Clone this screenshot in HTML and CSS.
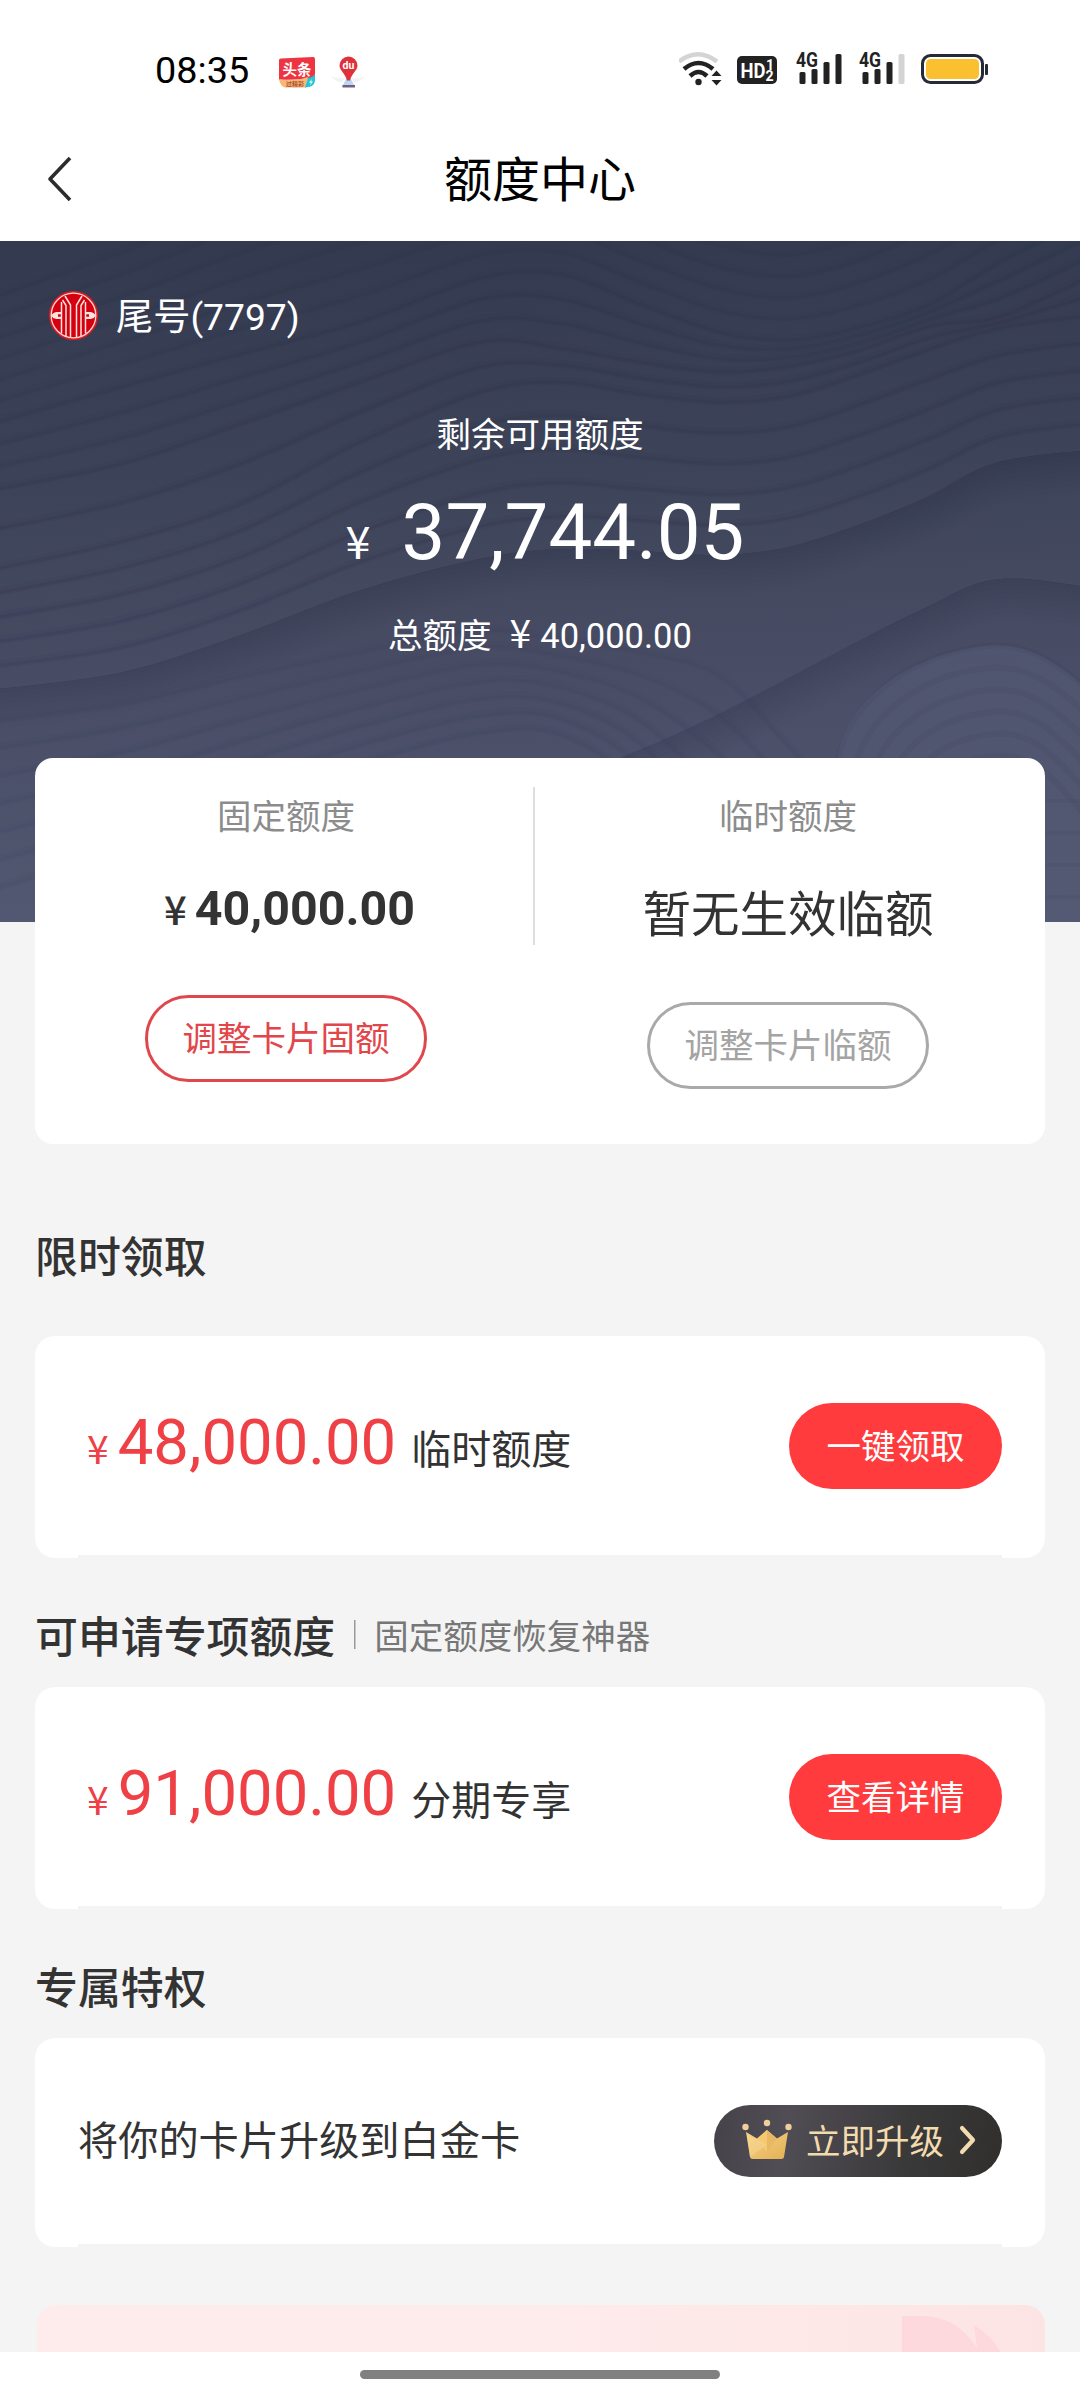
FILE: index.html
```html
<!DOCTYPE html>
<html lang="zh-CN">
<head>
<meta charset="utf-8">
<title>额度中心</title>
<link rel="stylesheet" href="styles.css">
</head>
<body>
<div class="screen">
  <div class="status">
    <div class="status-left">
      <span class="clock">08:35</span>
      <svg class="app" width="36" height="31" viewBox="0 0 36 31">
        <path d="M0 3Q0 1.500 2 1.400L34 0Q36 0 36 2V22L0 23Z" fill="#ee3440"/>
        <path d="M0 22Q16 25 29 20L27 30.500H6Q1 29 0 22Z" fill="#f8b877"/>
        <path d="M29 21Q34 20 36 17V24Q35 30.500 26 30.500Z" fill="#27c4d6"/>
        <text x="18" y="18" font-size="14.500" text-anchor="middle" class="t-bold" fill="#fff">头条</text>
        <text x="16" y="28.500" font-size="6" text-anchor="middle" class="t-bold" fill="#b0522e">过精彩</text>
        <path d="M33 22l-3 3.500h2l-1 3 3-4h-2z" fill="#fff"/>
      </svg>
      <svg class="pin" width="36" height="32" viewBox="0 0 36 32">
        <path d="M1 20q8 4 15 1l-5 6q-6-2-10-7zM35 20q-8 4-15 1l5 6q6-2 10-7z" fill="#f2f3f4"/>
        <path d="M18.500 18L25 31H12z" fill="#b7d9f3"/>
        <path d="M12.500 29h12.500v2.500H12.500z" fill="#7b5d84"/>
        <path d="M18.500 0.500a9 9 0 0 1 9 9c0 5-6 8-7.500 15h-3c-1.500-7-7.500-10-7.500-15a9 9 0 0 1 9-9z" fill="#e0313a"/>
        <text x="18.500" y="13" font-size="10.500" text-anchor="middle" class="t-bold" fill="#fff">du</text>
      </svg>
    </div>
    <svg class="status-right" width="312" height="40" viewBox="0 -4 312 40">
      <g fill="none" stroke-width="4.500">
        <path d="M0 9.500Q19-5 38 9.500" stroke="#d4d4d4"/>
        <path d="M5 17Q19.500 5 34 17" stroke="#222"/>
        <path d="M11 24Q19.500 16 28 24" stroke="#222"/>
      </g>
      <circle cx="19.500" cy="30" r="3.200" fill="#222"/>
      <path d="M32.500 24l5-5.500 5 5.500zM32.500 28l5 5.500 5-5.500z" fill="#222"/>
      <rect x="58" y="4" width="40" height="28" rx="5" fill="#222"/>
      <text x="61.500" y="26" font-size="21" textLength="25" lengthAdjust="spacingAndGlyphs" class="t-bold" fill="#fff">HD</text>
      <text x="87" y="17.500" font-size="14" class="t-bold" fill="#fff">1</text>
      <text x="86.500" y="29" font-size="14" class="t-bold" fill="#fff">2</text>
      <g fill="#222">
        <text x="117" y="14.500" font-size="20" textLength="22" lengthAdjust="spacingAndGlyphs" class="t-bold">4G</text>
        <rect x="120.500" y="20" width="6" height="12" rx="1.500"/><rect x="132.500" y="17" width="6" height="15" rx="1.500"/>
        <rect x="144.500" y="10" width="6" height="22" rx="1.500"/><rect x="156.500" y="2" width="6" height="30" rx="1.500"/>
        <text x="180" y="14.500" font-size="20" textLength="22" lengthAdjust="spacingAndGlyphs" class="t-bold">4G</text>
        <rect x="183.500" y="20" width="6" height="12" rx="1.500"/><rect x="195.500" y="17" width="6" height="15" rx="1.500"/>
        <rect x="207.500" y="10" width="6" height="22" rx="1.500"/>
      </g>
      <rect x="219.500" y="2" width="6" height="30" rx="1.500" fill="#d4d4d4"/>
      <rect x="243.500" y="3.500" width="60" height="27" rx="8" fill="#fff" stroke="#262a36" stroke-width="3"/>
      <rect x="247" y="7" width="53" height="20" rx="4.500" fill="#fbc02f"/>
      <rect x="306" y="12" width="3" height="11" rx="1" fill="#262a36"/>
    </svg>
  </div>

  <div class="navbar">
    <svg class="back" width="28" height="48" viewBox="0 0 28 48"><path d="M25 3L5 24L25 45" fill="none" stroke="#2c2c2e" stroke-width="3.600" stroke-linejoin="round"/></svg>
    <h1 class="title">额度中心</h1>
  </div>

  <section class="hero">
    <svg class="waves" id="waves" width="1080" height="681" viewBox="0 0 1080 681">
      <defs>
        <linearGradient id="fan" x1="0" y1="0" x2="0" y2="1"><stop offset="0" stop-color="#6a7090" stop-opacity=".25"/><stop offset="1" stop-color="#6a7090" stop-opacity="0"/></linearGradient>
      </defs>
      <path d="M838 520C838 470 900 415 985 405C1030 400 1060 425 1090 450V681H838Z" fill="url(#fan)"/>
    </svg>
    <div class="bank">
      <svg width="50" height="50" viewBox="0 0 50 50">
        <circle cx="24.500" cy="24.500" r="24.500" fill="#e11a22"/>
        <circle cx="24.500" cy="24.500" r="22.300" fill="#d5000f" stroke="#fbd9d3" stroke-width="1.300"/>
        <g fill="none" stroke="#fbe3dd" stroke-width="1.500">
          <path d="M12.500 42.500V11M17 45V14.500L13.500 9M21.500 46.500V14L16 5M27.500 46.500V14L33 5M32 45V14.500L35.500 9M36.500 42.500V11"/>
        </g>
        <path d="M2.500 24.500q1-3 5-3.500l5.500 0v2.200h-4v2.600h4v2.200h-5.500q-4-.5-5-3.500zM46.500 24.500q-1-3-5-3.500l-5.500 0v2.200h4v2.600h-4v2.200h5.500q4-.5 5-3.500z" fill="#fbe3dd"/>
      </svg>
      <span class="bank-name">尾号(7797)</span>
    </div>
    <div class="avail-label">剩余可用额度</div>
    <div class="avail"><span class="yen yen-l">¥</span><span class="avail-num">37,744.05</span></div>
    <div class="total"><span>总额度</span><span class="yen yen-t">¥</span><span>40,000.00</span></div>
  </section>

  <section class="quota">
    <div class="quota-col fixed">
      <div class="quota-label">固定额度</div>
      <div class="quota-num"><span class="yen yen-q">¥</span><b>40,000.00</b></div>
      <button class="pill pill-red">调整卡片固额</button>
    </div>
    <div class="quota-line"></div>
    <div class="quota-col temp">
      <div class="quota-label">临时额度</div>
      <div class="quota-none">暂无生效临额</div>
      <button class="pill pill-gray">调整卡片临额</button>
    </div>
  </section>

  <h2 class="heading heading-1">限时领取</h2>
  <section class="offer">
    <div class="offer-text"><span class="yen yen-o">¥</span><span class="offer-num">48,000.00</span><span class="offer-name">临时额度</span></div>
    <button class="action">一键领取</button>
  </section>

  <h2 class="heading heading-2">可申请专项额度<span class="heading-sub">固定额度恢复神器</span></h2>
  <section class="offer">
    <div class="offer-text"><span class="yen yen-o">¥</span><span class="offer-num">91,000.00</span><span class="offer-name">分期专享</span></div>
    <button class="action">查看详情</button>
  </section>

  <h2 class="heading heading-3">专属特权</h2>
  <section class="offer upgrade">
    <div class="upgrade-text">将你的卡片升级到白金卡</div>
    <button class="vip">
      <svg width="50" height="42" viewBox="0 0 50 42">
        <defs><linearGradient id="gold" x1="0" y1="0" x2="1" y2="1"><stop offset="0" stop-color="#f8d48d"/><stop offset="1" stop-color="#e3b052"/></linearGradient></defs>
        <path d="M4 13L15 19.500L25 11L35 19.500L46 13L42 38Q41.700 40 39.500 40H10.500Q8.300 40 8 38Z" fill="url(#gold)"/>
        <path d="M25 11L35 20L25 33Z" fill="#e8b962"/>
        <path d="M25 11L15 20L25 33Z" fill="#f4c972"/>
        <path d="M15 20L25 26L8 38L5 17Z" fill="#fbdc9b" opacity=".4"/>
        <circle cx="3.500" cy="8" r="3.200" fill="#efd09a"/><circle cx="25" cy="4" r="3.200" fill="#efd09a"/><circle cx="46.500" cy="8" r="3.200" fill="#efd09a"/>
      </svg>
      <span>立即升级</span>
      <svg width="20" height="32" viewBox="0 0 20 32"><path d="M4 4L15 16L4 28" fill="none" stroke="#f3dbb0" stroke-width="4.200" stroke-linecap="round" stroke-linejoin="round"/></svg>
    </button>
  </section>

  <section class="banner">
    <svg width="110" height="48" viewBox="0 0 110 48">
      <path d="M7 11H30Q62 12 82 43L79 20Q96 30 106 48H7Z" fill="#fdd9de"/>
    </svg>
  </section>

  <div class="homebar"><div class="handle"></div></div>
</div>
<script src="waves.js"></script>
</body>
</html>
```
FILE: styles.css
```css
* { box-sizing: border-box; }
body {
  margin: 0;
  background: #f4f4f4;
  color: #333;
  font-family: Roboto, "Noto Sans CJK SC", sans-serif;
}
h1, h2 { margin: 0; }
button {
  font-family: inherit;
  padding: 0;
  border: 0;
  background: none;
  white-space: nowrap;
}
.screen {
  width: 1080px;
  height: 2400px;
  display: flex;
  flex-direction: column;
  overflow: hidden;
}
.t-bold { font-weight: 700; }
.yen { font-family: "Noto Sans CJK SC", sans-serif; }

.status {
  flex: none;
  height: 116px;
  padding: 48px 89px 0 155px;
  display: flex;
  justify-content: space-between;
  align-items: flex-start;
  background: #fff;
}
.status-left { display: flex; align-items: flex-start; height: 40px; padding-top: 3px; }
.clock {
  width: 124px;
  font-size: 37.8px;
  line-height: 38px;
  color: #000;
}
.app { margin-top: 6px; }
.pin { margin: 5px 0 0 15px; }

.navbar {
  flex: none;
  height: 125px;
  padding: 1px 45px 0;
  display: grid;
  grid-template-columns: 40px 1fr 40px;
  align-items: center;
  background: #fff;
}
.title {
  padding-top: 4px;
  font-size: 48px;
  font-weight: 400;
  line-height: 70px;
  text-align: center;
  color: #000;
}

.hero {
  position: relative;
  flex: none;
  height: 681px;
  padding-top: 50px;
  display: flex;
  flex-direction: column;
  align-items: center;
  color: #fff;
  background: linear-gradient(178deg, #333a4f 0%, #3d4358 35%, #494e66 65%, #545a73 100%);
}
.waves { position: absolute; left: 0; top: 0; }
.hero > div { position: relative; }
.bank {
  align-self: stretch;
  height: 50px;
  padding-left: 49px;
  display: flex;
  align-items: center;
  gap: 17px;
}
.bank-name { padding-top: 2px; font-size: 37.2px; line-height: 50px; }
.avail-label { margin-top: 74px; font-size: 34.5px; line-height: 40px; }
.avail {
  margin-top: 38px;
  height: 80px;
  line-height: 80px;
  display: flex;
  align-items: baseline;
  gap: 31px;
  padding-left: 10px;
}
.avail-num { font-size: 78px; }
.yen-l { font-size: 45px; }
.total {
  margin-top: 38px;
  height: 40px;
  line-height: 40px;
  font-size: 34.5px;
  display: flex;
  align-items: baseline;
}
.yen-t { font-size: 39px; margin: 0 9px 0 18px; }

.quota {
  position: relative;
  flex: none;
  height: 386px;
  margin: -164px 35px 0;
  border-radius: 18px;
  background: #fff;
  display: grid;
  grid-template-columns: 498px 2px 510px;
}
.quota-col {
  padding-top: 38px;
  display: flex;
  flex-direction: column;
  align-items: center;
}
.fixed { padding-left: 4px; }
.temp { padding-right: 4px; }
.quota-line { height: 158px; margin-top: 29px; background: #dedede; }
.quota-label { padding-top: 1px; height: 40px; font-size: 34.5px; line-height: 40px; color: #8c8c8c; }
.quota-num {
  margin-top: 42px;
  height: 60px;
  line-height: 60px;
  font-size: 48.4px;
  display: flex;
  align-items: baseline;
  gap: 8px;
  padding-left: 7px;
}
.yen-q { font-size: 40px; font-weight: 500; }
.quota-none { margin-top: 50px; font-size: 48.5px; line-height: 60px; }
.pill {
  width: 282px;
  height: 87px;
  padding-bottom: 5px;
  border-radius: 44px;
  border: 3px solid;
  font-size: 34.5px;
}
.pill-red { margin-top: 57px; color: #e2454a; border-color: #e0474d; }
.pill-gray { margin-top: 56px; color: #a4a4a4; border-color: #a9a9a9; }

.heading {
  flex: none;
  height: 50px;
  margin-left: 35px;
  font-size: 42.9px;
  font-weight: 500;
  line-height: 50px;
  display: flex;
  align-items: center;
}
.heading-1 { margin-top: 89px; margin-bottom: 53px; }
.heading-2 { margin-top: 55px; margin-bottom: 24px; }
.heading-3 { margin-top: 55px; margin-bottom: 24px; }
.heading-sub {
  margin: -3px 0 0 19px;
  padding-left: 20px;
  font-size: 34.5px;
  font-weight: 400;
  color: #777;
  background: linear-gradient(#999, #999) 0 8px / 1.5px 29px no-repeat;
}
.offer {
  flex: none;
  height: 222px;
  margin: 0 35px;
  padding: 0 43px;
  border-radius: 20px;
  display: flex;
  justify-content: space-between;
  background: linear-gradient(#f4f4f4, #f4f4f4) 43px 100% / 924px 3px no-repeat, #fff;
}
.offer-text {
  height: 80px;
  margin-top: 66px;
  padding-left: 9px;
  line-height: 80px;
  display: flex;
  align-items: baseline;
}
.yen-o { font-size: 39px; color: #ee4045; margin-right: 9px; }
.offer-num { font-size: 63.4px; color: #ee4045; }
.offer-name { font-size: 40px; margin-left: 15px; }
.action {
  width: 213px;
  height: 86px;
  margin-top: 67px;
  padding-bottom: 5px;
  border-radius: 43px;
  background: #ff3b3d;
  color: #fff;
  font-size: 34.5px;
}
.upgrade { height: 209px; }
.upgrade-text { margin-top: 74px; font-size: 40.2px; line-height: 60px; }
.vip {
  width: 288px;
  height: 72px;
  margin-top: 67px;
  padding: 0 0 2px 28px;
  border-radius: 36px;
  background: linear-gradient(100deg, #454349 0%, #504d54 25%, #3b3a3b 65%, #302f2d 100%);
  color: #f3dbb0;
  font-size: 34.5px;
  display: flex;
  align-items: center;
}
.vip span { margin: -3px 14px 0 14px; }

.banner {
  flex: none;
  height: 48px;
  margin: 58px 35px 0 37px;
  border-radius: 20px 20px 0 0;
  background: linear-gradient(90deg, #feecec, #feebeb 50%, #fde4e4);
  display: flex;
  justify-content: flex-end;
  padding-right: 40px;
}
.homebar {
  flex: none;
  height: 49px;
  margin-top: -1px;
  padding-top: 18px;
  display: flex;
  justify-content: center;
  background: #fff;
  position: relative;
}
.handle { width: 360px; height: 9px; border-radius: 5px; background: #808080; }
```
FILE: waves.js
```js
// Contour lines of the hero background: key curves, interpolated in between.
const xs = [-20, 120, 240, 360, 480, 560, 640, 720, 790, 860, 930, 1000, 1100];
const keys = [
  [60, 10, -40, -80, -100, -100, -70, -40, -30, -50, -90, -120, -150],
  [185, 145, 112, 80, 36, 32, 62, 90, 98, 85, 62, 20, -30],
  [250, 222, 182, 140, 100, 106, 120, 130, 124, 108, 84, 74, 30],
  [330, 300, 262, 200, 150, 140, 152, 160, 154, 132, 107, 86, 72],
  [450, 432, 395, 350, 318, 308, 310, 314, 306, 284, 256, 221, 208]
];
const fan = [860, 760, 690, 620, 565, 540, 510, 474, 438, 401, 366, 338, 348];
const svg = document.getElementById('waves');

function addLine(ys, width, opacity) {
  let d = `M${xs[0]} ${ys[0]}`;
  for (let i = 0; i < xs.length - 1; i++) {
    const p = Math.max(i - 1, 0);
    const n = Math.min(i + 2, xs.length - 1);
    const x1 = xs[i] + (xs[i + 1] - xs[p]) / 6;
    const y1 = ys[i] + (ys[i + 1] - ys[p]) / 6;
    const x2 = xs[i + 1] - (xs[n] - xs[i]) / 6;
    const y2 = ys[i + 1] - (ys[n] - ys[i]) / 6;
    d += `C${x1} ${y1} ${x2} ${y2} ${xs[i + 1]} ${ys[i + 1]}`;
  }
  draw(d, width, opacity);
}
function draw(d, width, opacity) {
  const path = document.createElementNS('http://www.w3.org/2000/svg', 'path');
  path.setAttribute('d', d);
  path.setAttribute('fill', 'none');
  path.setAttribute('stroke', '#262c44');
  path.setAttribute('stroke-width', width);
  path.setAttribute('opacity', opacity);
  svg.appendChild(path);
}
function family(a, b, count, opacity) {
  for (let k = 0; k < count; k++) {
    const ys = a.map((v, i) => v + (b[i] - v) * k / count);
    addLine(ys, 8, opacity * 0.6);
    addLine(ys.map(v => v + 1), 3, opacity);
  }
}
function edge(ys, opacity) {
  for (let k = 0; k < 8; k++) {
    addLine(ys.map(v => v + 2 + k * 2.5), 4 + k * 5, opacity);
  }
}
family(keys[0], keys[1], 6, 0.08);
family(keys[1], keys[2], 3, 0.1);
family(keys[2], keys[3], 2, 0.12);
family(keys[3], keys[4], 5, 0.12);
edge(keys[4], 0.02);
edge(fan, 0.022);
family(keys[4].map((v, i) => v + [30, 30, 40, 60, 70, 90, 100, 120, 200, 300, 400, 500, 600][i]),
  keys[4].map((v, i) => v + [230, 200, 190, 190, 190, 200, 260, 400, 500, 600, 700, 700, 700][i]), 7, 0.045);
for (let k = 0; k < 6; k++) {
  draw(`M${838 + k * 16} ${520 + k * 14}C${845 + k * 14} ${470 + k * 17} ${900 + k * 8} ${415 + k * 21} ${985 + k * 2} ${405 + k * 22}C${1030 + k} ${400 + k * 22} 1060 ${425 + k * 24} 1090 ${450 + k * 26}`, 6, 0.07);
}
for (let k = 0; k < 4; k++) {
  draw(`M1040 ${560 + k * 32}L1090 ${560 + k * 32}`, 4, 0.06);
}
```
